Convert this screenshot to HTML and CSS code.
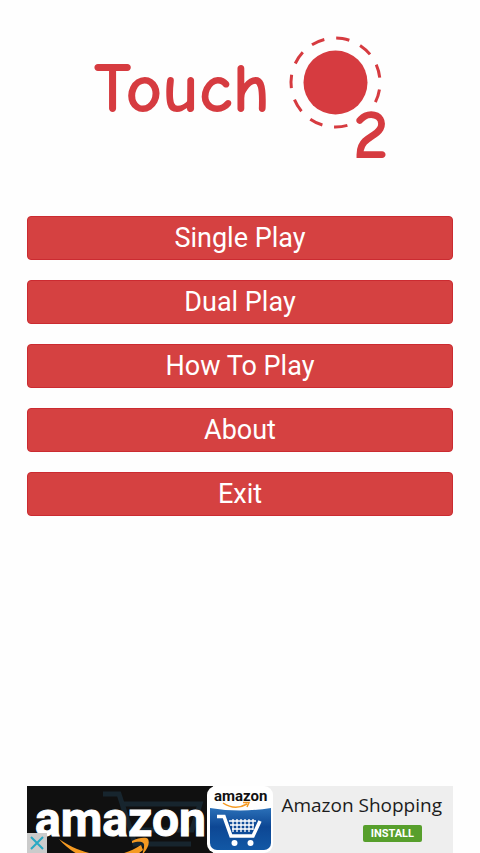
FILE: index.html
```html
<!DOCTYPE html>
<html lang="en">
<head>
<meta charset="utf-8">
<meta name="viewport" content="width=device-width, initial-scale=1">
<title>Touch O2</title>
<link rel="stylesheet" href="styles.css">
</head>
<body>
<main class="screen">
  <h1 class="logo">
    <svg class="logo-art" viewBox="80 25 320 145" role="img" aria-label="Touch O2">
      <circle class="disc" cx="335.5" cy="82.5" r="32"/>
      <circle class="orbit" cx="335.5" cy="82.5" r="44.5" pathLength="110" transform="rotate(9 335.5 82.5)"/>
      <text class="word" x="94" y="112">Touch</text>
      <text class="word" x="353" y="158">2</text>
    </svg>
  </h1>
  <nav class="menu">
    <button class="item" type="button">Single Play</button>
    <button class="item" type="button">Dual Play</button>
    <button class="item" type="button">How To Play</button>
    <button class="item" type="button">About</button>
    <button class="item" type="button">Exit</button>
  </nav>
  <aside class="ad">
    <svg class="ad-art" viewBox="27 786 246 67" aria-hidden="true">
      <defs>
        <linearGradient id="blue" x1="0" y1="0" x2="0" y2="1">
          <stop offset="0" stop-color="#2b70b8"/>
          <stop offset="0.45" stop-color="#0d4794"/>
          <stop offset="1" stop-color="#1258a5"/>
        </linearGradient>
        <clipPath id="tile"><rect x="210" y="788" width="61" height="62" rx="7"/></clipPath>
      </defs>
      <rect x="27" y="786" width="186" height="67" fill="#101010"/>
      <path d="M103 794h16l16 50h56M122 804h78l-8 26h-62" fill="none" stroke="#17252e" stroke-width="5"/>
      <text class="brand" x="35" y="836">amazon</text>
      <path d="M59 839C77 852 112 865 141 845L143 850C116 873 77 861 59 839Z" fill="#f59a22"/>
      <path d="M132 841C139 837 147 837 148 839C150 843 148 849 142 855C144 848 145 844 143 843C141 841 136 842 132 843Z" fill="#f59a22"/>
      <rect x="207" y="786" width="66" height="67" rx="9" fill="#fff"/>
      <g clip-path="url(#tile)">
        <path d="M210 808Q240 813 271 808V850H210Z" fill="url(#blue)"/>
      </g>
      <text class="brand-small" x="214" y="801">amazon</text>
      <path d="M223 803Q235 811 247 804M243 802.500H249L247 807" fill="none" stroke="#f59a22" stroke-width="1.500"/>
      <path d="M217 816.500H224L231 836H253L260 821" fill="none" stroke="#fff" stroke-width="3.500"/>
      <path d="M229 821H256M230 825H254M232 829H253M233 819V832M237 819V832M241 819V832M245 819V832M249 819V832M253 819V830" fill="none" stroke="#fff" stroke-width="1.300"/>
      <circle cx="234.500" cy="843" r="3" fill="#fff"/>
      <circle cx="250.500" cy="843" r="3" fill="#fff"/>
    </svg>
    <div class="ad-copy">
      <p class="ad-title">Amazon Shopping</p>
      <a class="install" href="#install">INSTALL</a>
    </div>
    <button class="close" type="button" aria-label="Close ad">
      <svg class="close-icon" viewBox="0 0 20 20"><path d="M4 4L16 16M16 4L4 16" fill="none" stroke="#27a9c4" stroke-width="2"/></svg>
    </button>
  </aside>
</main>
</body>
</html>
```
FILE: styles.css
```css
* {
  box-sizing: border-box;
}

body {
  margin: 0;
  background: #fefefe;
  font-family: Roboto, sans-serif;
}

.screen {
  display: flex;
  flex-direction: column;
  min-height: 100vh;
  padding: 25px 27px 0;
}

.logo {
  margin: 0 0 46px;
  text-align: center;
  line-height: 0;
}

.logo-art {
  width: 320px;
  max-width: 100%;
}

.disc {
  fill: #d63b40;
}

.orbit {
  fill: none;
  stroke: #d63b40;
  stroke-width: 3;
  stroke-dasharray: 5.3 14.7 5.3 4.7 5.3 4.7 5.3 4.7 5.3 4.7 5.3 4.7 5.3 4.7 5.3 4.7 5.3 4.7 5.3 4.7;
}

.word {
  font: 700 71px "Comic Sans MS", "Comic Neue", Lato, sans-serif;
  fill: #d63b40;
}

.menu {
  display: flex;
  flex-direction: column;
  gap: 20px;
}

.item {
  height: 44px;
  padding: 0;
  border: 1px solid #cb2b31;
  border-radius: 4px;
  background: #d54141;
  color: #fff;
  font: 400 27px/40px Roboto, sans-serif;
}

.ad {
  position: relative;
  display: flex;
  margin-top: auto;
  background: #eeeeee;
}

.ad-art {
  display: block;
  flex: none;
  width: 246px;
  height: 67px;
}

.brand {
  font: 700 48px Roboto, sans-serif;
  fill: #fff;
  stroke: #fff;
  stroke-width: 1;
}

.brand-small {
  font: 700 15px Roboto, sans-serif;
  fill: #111;
}

.ad-copy {
  display: flex;
  flex: 1;
  flex-direction: column;
  align-items: flex-end;
  padding: 6px 11px 0 0;
}

.ad-title {
  margin: 0;
  color: #1c1c1c;
  font: 400 19px/26px "Open Sans", sans-serif;
  white-space: nowrap;
}

.install {
  margin: 7px 20px 0 0;
  padding: 0 8px;
  border-radius: 2px;
  background: #579f2c;
  color: #fff;
  font: 700 11px/17px Roboto, sans-serif;
  text-decoration: none;
}

.close {
  position: absolute;
  bottom: 0;
  left: 0;
  width: 20px;
  height: 20px;
  padding: 0;
  border: 0;
  background: #cbcbcb;
}

.close-icon {
  display: block;
  width: 20px;
  height: 20px;
}
```
